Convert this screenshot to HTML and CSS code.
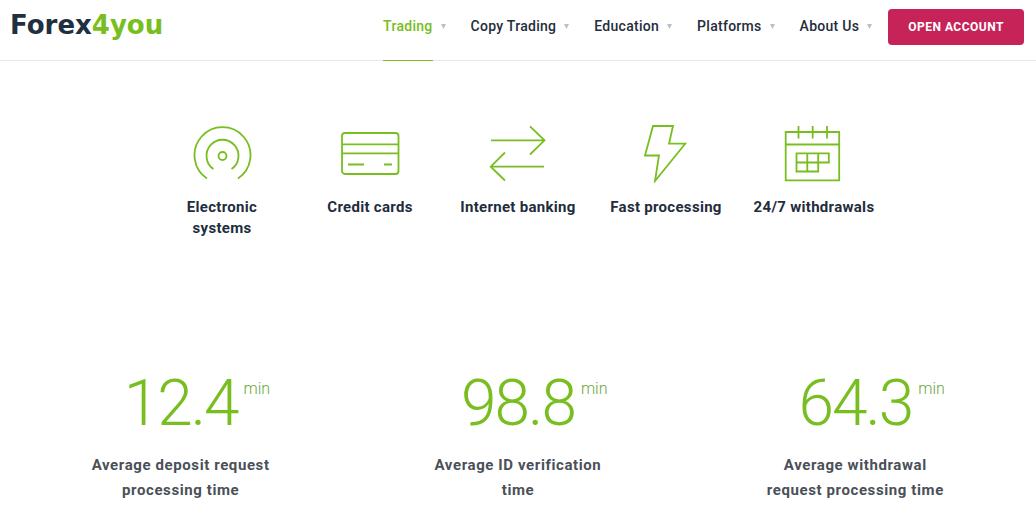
FILE: index.html
```html
<!DOCTYPE html>
<html lang="en">
<head>
<meta charset="utf-8">
<meta name="viewport" content="width=device-width, initial-scale=1">
<title>Forex4you</title>
<link rel="stylesheet" href="styles.css">
</head>
<body>
<header class="header">
  <a class="logo" href="#">Forex<span class="logo-accent">4you</span></a>
  <nav class="nav">
    <a class="nav-link active" href="#"><span class="nav-text">Trading</span><svg class="caret" viewBox="0 0 5 5"><path d="M0 0h5L2.500 5z"/></svg></a>
    <a class="nav-link" href="#"><span class="nav-text">Copy Trading</span><svg class="caret" viewBox="0 0 5 5"><path d="M0 0h5L2.500 5z"/></svg></a>
    <a class="nav-link" href="#"><span class="nav-text">Education</span><svg class="caret" viewBox="0 0 5 5"><path d="M0 0h5L2.500 5z"/></svg></a>
    <a class="nav-link" href="#"><span class="nav-text">Platforms</span><svg class="caret" viewBox="0 0 5 5"><path d="M0 0h5L2.500 5z"/></svg></a>
    <a class="nav-link" href="#"><span class="nav-text">About Us</span><svg class="caret" viewBox="0 0 5 5"><path d="M0 0h5L2.500 5z"/></svg></a>
  </nav>
  <button class="open-account" type="button">OPEN ACCOUNT</button>
</header>
<main>
  <section class="features">
    <div class="feature">
      <svg class="icon" viewBox="0 0 60 60"><path d="M15 55.500A28 28 0 1 1 46 55.500"/><path d="M21.500 46A16 16 0 1 1 39.500 46"/><circle cx="30.500" cy="33" r="4"/></svg>
      <h3 class="feature-title">Electronic systems</h3>
    </div>
    <div class="feature">
      <svg class="icon" viewBox="0 0 60 60"><rect x="2" y="10" width="56.500" height="41" rx="3"/><path d="M2 21.400h56.500M2 30.400h56.500M8 41.500h16M44 41.500h8"/></svg>
      <h3 class="feature-title">Credit cards</h3>
    </div>
    <div class="feature">
      <svg class="icon" viewBox="0 0 60 60"><path d="M3 17.300h53.500M42 3.300l14.500 14L42 31.500M56 43.700H2.700M17 29.500L2.700 43.700 17 57.500"/></svg>
      <h3 class="feature-title">Internet banking</h3>
    </div>
    <div class="feature">
      <svg class="icon" viewBox="0 0 60 60"><path d="M17 3h20l-4 17.700h16.200L19 58l4-25.500H9z"/></svg>
      <h3 class="feature-title">Fast processing</h3>
    </div>
    <div class="feature">
      <svg class="icon" viewBox="0 0 60 60"><path d="M1.700 9h53.500v48.300H1.700zM1.700 21.500h53.500M14.500 3v12.500M28.700 3v12.500M43 3v12.500M12.500 30.300h32.300v9.200H12.500zM12.500 39.500v9h21.700V30.300M23.300 30.300v18.200"/></svg>
      <h3 class="feature-title">24/7 withdrawals</h3>
    </div>
  </section>
  <section class="stats">
    <div class="stat">
      <div class="stat-value">12.4<span class="unit">min</span></div>
      <p class="stat-label">Average deposit request processing time</p>
    </div>
    <div class="stat">
      <div class="stat-value">98.8<span class="unit">min</span></div>
      <p class="stat-label">Average ID verification time</p>
    </div>
    <div class="stat">
      <div class="stat-value">64.3<span class="unit">min</span></div>
      <p class="stat-label">Average withdrawal request processing time</p>
    </div>
  </section>
</main>
</body>
</html>
```
FILE: styles.css
```css
* { box-sizing: border-box; }

body {
  margin: 0;
  background: #fff;
  color: #1f2d3d;
  font-family: Roboto, "Liberation Sans", sans-serif;
}

.header {
  display: flex;
  align-items: flex-start;
  height: 61px;
  padding: 0 12px 0 10px;
  border-bottom: 1px solid #e5e7e9;
}

.logo {
  margin-right: auto;
  padding-top: 9px;
  color: #1f3040;
  font: bold 26px/32px "DejaVu Sans", sans-serif;
  text-decoration: none;
}

.logo-accent { color: #78be20; }

.nav { display: flex; gap: 25px; }

.nav-link {
  display: flex;
  gap: 8px;
  color: #1f2d3d;
  font-size: 14px;
  font-weight: 500;
  line-height: 20px;
  letter-spacing: 0.02em;
  text-decoration: none;
}

.nav-text {
  height: 61px;
  padding-top: 16px;
}

.active { color: #78be20; }

.active .nav-text { border-bottom: 1px solid #78be20; }

.caret {
  width: 5px;
  height: 5px;
  margin-top: 24px;
  fill: #b9c0c7;
}

.open-account {
  height: 36px;
  margin: 9px 0 0 16px;
  padding: 0 20px;
  border: 0;
  border-radius: 4px;
  background: #c62459;
  color: #fff;
  font: bold 12px/36px Roboto, sans-serif;
  letter-spacing: 0.5px;
}

.features {
  display: grid;
  grid-template-columns: repeat(5, minmax(0, 148px));
  justify-content: center;
  padding: 62px 12px 0;
}

.feature {
  padding: 0 12px;
  text-align: center;
}

.icon {
  display: block;
  width: 60px;
  height: 60px;
  margin: 0 auto 14px;
  fill: none;
  stroke: #78be20;
  stroke-width: 1.8;
}

.feature-title {
  margin: 0;
  font-size: 15px;
  font-weight: 700;
  line-height: 21px;
  letter-spacing: 0.02em;
}

.stats {
  display: grid;
  grid-template-columns: repeat(3, minmax(0, 1fr));
  padding: 125px 12px 0;
}

.stat {
  display: flex;
  flex-direction: column;
  align-items: center;
}

.stat-value {
  position: relative;
  color: #78be20;
  font-size: 64px;
  font-weight: 300;
  line-height: 80px;
  letter-spacing: -2px;
}

.unit {
  position: absolute;
  top: 15px;
  left: 100%;
  padding-left: 6px;
  color: #6aa63f;
  font-size: 16px;
  line-height: 20px;
  letter-spacing: 0;
}

.stat-label {
  max-width: 184px;
  margin: 9px 0 0;
  color: #4a5058;
  font-size: 15px;
  font-weight: 700;
  line-height: 25px;
  letter-spacing: 0.04em;
  text-align: center;
}
```
